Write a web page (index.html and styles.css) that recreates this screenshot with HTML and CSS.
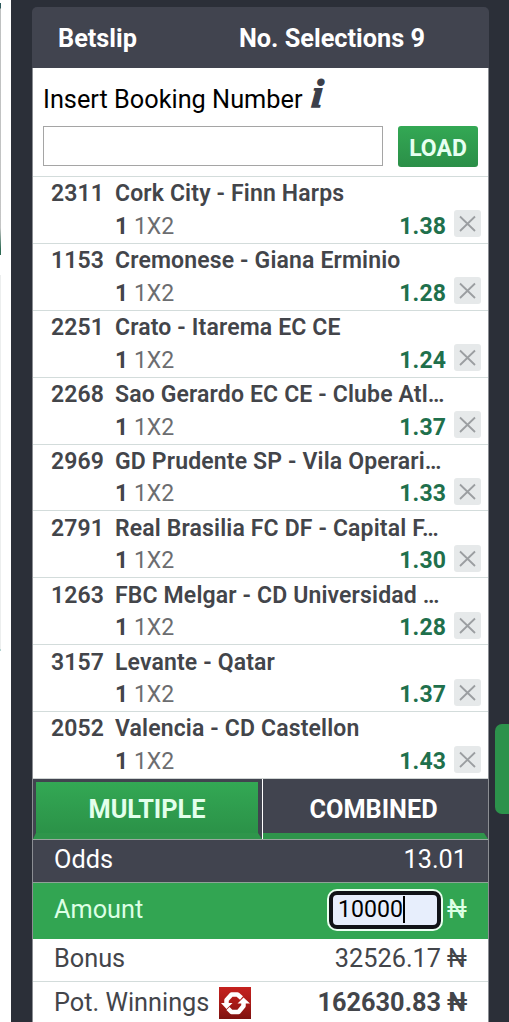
FILE: index.html
```html
<!DOCTYPE html>
<html>
<head>
  <meta charset="utf-8">
  <title>Betslip</title>
  <link rel="stylesheet" href="styles.css">
</head>
<body>
  <div class="page-edge"><div class="edge-top"></div><div class="edge-bottom"></div></div>
  <div class="side-tab"></div>

  <div class="betslip">
    <div class="header">
      <span class="title">Betslip</span>
      <span class="count">No. Selections 9</span>
    </div>

    <div class="slip-body">
      <div class="booking">
        <div class="booking-label">
          <label for="bookingNumber">Insert Booking Number</label>
          <span class="info">i</span>
        </div>
        <div class="booking-form">
          <input type="text" id="bookingNumber">
          <button class="load">LOAD</button>
        </div>
      </div>

      <div class="selections" id="selections"></div>

      <div class="tabs">
        <div class="tab active">MULTIPLE</div>
        <div class="tab">COMBINED</div>
      </div>

      <div class="totals">
        <div class="total odds-total">
          <span>Odds</span>
          <span class="value">13.01</span>
        </div>
        <div class="total amount">
          <span>Amount</span>
          <div class="amount-box"><span class="typed">10000</span><span class="caret"></span></div>
          <span class="naira">₦</span>
        </div>
        <div class="total bonus">
          <span>Bonus</span>
          <span class="value">32526.17</span>
          <span class="naira">₦</span>
        </div>
        <div class="total winnings">
          <span>Pot. Winnings</span>
          <svg class="refresh" viewBox="0 0 32 32">
            <defs>
              <linearGradient id="red" x1="0" y1="0" x2="0" y2="1">
                <stop offset="0" stop-color="#c5221f"/>
                <stop offset="0.5" stop-color="#a91a17"/>
                <stop offset="1" stop-color="#7d1210"/>
              </linearGradient>
            </defs>
            <rect width="32" height="32" fill="url(#red)"/>
            <path d="M7.500 17 L7.500 13 L12.500 7.500 L18.500 7.500 L22.500 11 M24.500 15 L24.500 19 L19.500 25 L12.500 25 L9 21.500" fill="none" stroke="#fff" stroke-width="4.500" stroke-linejoin="round"/>
            <path d="M2 16 L13.500 16 L7.500 22 Z M31 16.500 L18.500 16.500 L24.500 10.500 Z" fill="#fff"/>
          </svg>
          <span class="value">162630.83</span>
          <span class="naira">₦</span>
        </div>
      </div>
    </div>
  </div>

  <script>
    const bets = [
      ['2311', 'Cork City - Finn Harps', '1.38'],
      ['1153', 'Cremonese - Giana Erminio', '1.28'],
      ['2251', 'Crato - Itarema EC CE', '1.24'],
      ['2268', 'Sao Gerardo EC CE - Clube Atl…', '1.37'],
      ['2969', 'GD Prudente SP - Vila Operari…', '1.33'],
      ['2791', 'Real Brasilia FC DF - Capital F…', '1.30'],
      ['1263', 'FBC Melgar - CD Universidad …', '1.28'],
      ['3157', 'Levante - Qatar', '1.37'],
      ['2052', 'Valencia - CD Castellon', '1.43']
    ];

    document.getElementById('selections').innerHTML = bets.map(function(bet) {
      return `
        <div class="bet">
          <span class="code">${bet[0]}</span>
          <span class="match">${bet[1]}</span>
          <span class="pick"><b>1</b> 1X2</span>
          <span class="odds">${bet[2]}</span>
          <button class="remove">
            <svg viewBox="0 0 27 27"><path d="M6 6.500 L21 21 M21 6.500 L6 21"/></svg>
          </button>
        </div>`;
    }).join('');
  </script>
</body>
</html>
```

FILE: styles.css
```css
* {
  box-sizing: border-box;
}
body {
  margin: 0;
  height: 1022px;
  padding: 7px 21px 0 32px;
  overflow: hidden;
  background: linear-gradient(90deg, #fff 11.5px, #2b2f38 11.5px);
  font-family: Roboto, sans-serif;
  font-size: 25.3px;
  color: #43454a;
  white-space: nowrap;
}
.page-edge {
  position: absolute;
  left: 0;
  top: 3px;
  width: 1px;
}
.edge-top {
  height: 252px;
  background: linear-gradient(#2d5a5c 5px, #bfc1c1 6px, #c4c5c5 225px, #2f6b55 246px);
}
.edge-bottom {
  height: 376px;
  margin-top: 20px;
  background: #eceeee;
  border-bottom: 2px solid #b4d3d1;
}
.side-tab {
  position: absolute;
  left: 495px;
  top: 724px;
  width: 20px;
  height: 90px;
  border-radius: 7px;
  background: #2c924b;
}
.betslip {
  width: 457px;
  height: 1015px;
  border-radius: 5px 5px 0 0;
  overflow: hidden;
}
.header {
  display: flex;
  align-items: center;
  height: 61px;
  padding: 1px 26px 0;
  background: #41444f;
  color: #fff;
  font-weight: bold;
}
.count {
  margin-left: auto;
  margin-right: 38px;
}
.slip-body {
  height: 954px;
  border: 1px solid #8b8e93;
  border-width: 0 1px;
  background: #fff;
}
.booking {
  height: 108px;
  padding: 13px 10px 0;
  color: #000;
}
.booking-label {
  display: flex;
  align-items: center;
  height: 37px;
}
.info {
  margin: -12px 0 0 10px;
  font: italic bold 40px "Liberation Serif", serif;
  color: #3c3f4a;
  -webkit-text-stroke: 1.5px #3c3f4a;
  transform: skewX(-5deg);
}
.booking-form {
  display: flex;
  justify-content: space-between;
  margin-top: 8px;
}
.booking-form input {
  width: 340px;
  height: 40px;
  border: 1px solid #a5a5a5;
}
.load {
  width: 80px;
  height: 41px;
  padding: 3px 0 0;
  border: 0;
  border-radius: 3px;
  background: linear-gradient(#33a854, #2b8f48);
  color: #e6fff0;
  font: bold 23px Roboto, sans-serif;
}
.bet {
  display: grid;
  grid-template-columns: 64px 1fr auto 33px;
  grid-template-rows: 33.6px 31.6px;
  align-items: center;
  height: 66.9px;
  padding: 0 9px 0 18px;
  border-top: 1px solid #d3dcdb;
  font-size: 23px;
}
.code, .match {
  font-weight: 600;
  letter-spacing: 0.15px;
}
.match {
  grid-column: 2 / 5;
}
.pick {
  grid-column: 2;
  color: #6c6d70;
}
.pick b {
  color: #43454a;
}
.odds {
  color: #1f704c;
  font-weight: bold;
  letter-spacing: 0.1px;
}
.remove {
  width: 27px;
  height: 27px;
  margin: -5px 0 0 8px;
  padding: 0;
  border: 0;
  border-radius: 3px;
  background: #e6e9ea;
}
.remove svg {
  display: block;
  fill: none;
  stroke: #9b9ea1;
  stroke-width: 1.8;
}
.tabs {
  display: flex;
  height: 61.5px;
  background: #41444f;
  color: #fff;
  font-weight: bold;
  border-top: 1px solid #cfd4d3;
  border-bottom: 1px solid #9aa89f;
}
.tab {
  flex: 1;
  display: flex;
  align-items: center;
  justify-content: center;
  padding-top: 5px;
  border: solid #41444f;
  border-width: 3px 4px 6px 0;
  border-bottom-color: #2f954b;
}
.tab.active {
  flex: 0 0 229px;
  border-left-width: 3px;
  background: linear-gradient(#33a854, #2b9248) padding-box;
  color: #e2ffeb;
}
.tab + .tab {
  margin-left: 1px;
  box-shadow: -1px 0 #fff;
}
.total {
  display: flex;
  align-items: center;
  padding: 0 21px;
}
.total .value, .amount-box {
  margin-left: auto;
}
.odds-total {
  height: 43px;
  padding-bottom: 2px;
  background: #41444f;
  color: #fff;
  border-bottom: 1px solid #8fa398;
}
.amount {
  height: 56px;
  padding-bottom: 2px;
  background: #32a552;
  color: #dcffe5;
}
.amount-box {
  display: flex;
  align-items: center;
  width: 112px;
  height: 38px;
  padding-left: 5px;
  border: 4px solid #111318;
  border-radius: 8px;
  box-shadow: 0 0 0 2px #e9fff0;
  background: #e7eefc;
  color: #000;
  font-size: 23.1px;
}
.caret {
  width: 2px;
  height: 27px;
  background: #000;
}
.naira {
  width: 20px;
  margin-left: 6px;
  font-size: 25px;
}
.amount .naira {
  margin-left: 6px;
}
.bonus {
  height: 42px;
  padding-bottom: 2px;
}
.winnings {
  height: 47px;
  padding-bottom: 4px;
  border-top: 1px solid #d3dcdb;
}
.refresh {
  width: 32px;
  height: 32px;
  margin-left: 10px;
}
.winnings .value, .winnings .naira {
  font-weight: bold;
}
```
